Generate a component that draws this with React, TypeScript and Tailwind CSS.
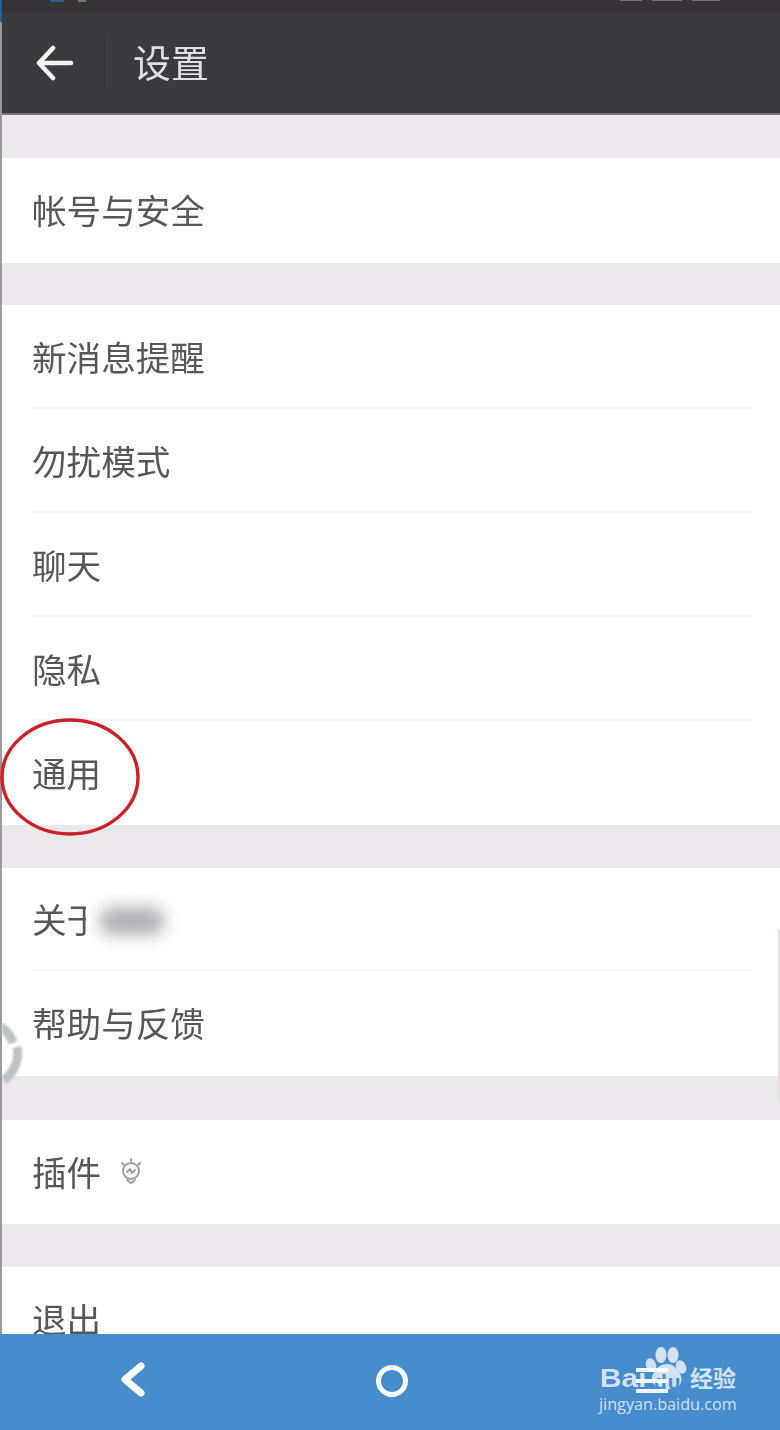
import React from "react";

const font = { fontFamily: '"Noto Sans CJK SC", "Noto Sans", sans-serif' };

function Row({ label, h, divider, children }: { label: string; h: string; divider?: boolean; children?: React.ReactNode }) {
  return (
    <div className={`${h} ml-[2px] bg-white pl-[30px] pr-[28px] flex flex-col shrink-0`}>
      <div className={`flex-1 flex items-center gap-[17px] ${divider ? "border-b-2 border-[#f6f5f7]" : "pb-[2px]"}`}>
        <span className="text-[34.6px] leading-none text-[#575759] blur-[0.6px]">{label}</span>
        {children}
      </div>
    </div>
  );
}

function Gap({ h }: { h: string }) {
  return <div className={`${h} bg-[#ebe8ec] ml-[2px] shrink-0`} />;
}

export default function App() {
  return (
    <div className="relative w-[780px] h-[1430px] overflow-hidden bg-[#9a9a9c] flex flex-col" style={font}>
      <div className="h-[12px] shrink-0 bg-[#353238] flex items-start justify-between pl-[50px] pr-[60px]">
        <div className="flex gap-[14px]">
          <div className="w-[14px] h-[2px] bg-[#2b5f8a] blur-[0.5px]" />
          <div className="w-[8px] h-[2px] bg-[#5d8a62] blur-[0.5px]" />
        </div>
        <div className="flex gap-[10px]">
          <div className="w-[22px] h-[1px] bg-[#77757a] blur-[0.5px]" />
          <div className="w-[30px] h-[1px] bg-[#77757a] blur-[0.5px]" />
          <div className="w-[28px] h-[1px] bg-[#77757a] blur-[0.5px]" />
        </div>
      </div>
      <header className="h-[103px] shrink-0 ml-[2px] bg-[#3a3a3f] border-b-2 border-[#77777b] flex items-center">
        <svg className="ml-[34px] blur-[0.5px]" width="38" height="36" viewBox="0 0 38 36" fill="none" stroke="#f4f4f4" strokeWidth="4.6" strokeLinecap="round" strokeLinejoin="round">
          <path d="M17 3 L3 18 L17 33" />
          <path d="M4 18 H35" />
        </svg>
        <div className="ml-[30px] w-[1px] h-[54px] bg-[#37373b]" />
        <span className="ml-[28px] mb-[4px] text-[38px] leading-none text-[#e0e0e2] blur-[0.6px]">设置</span>
      </header>

      <Gap h="h-[43px]" />
      <Row label="帐号与安全" h="h-[105px]" />
      <Gap h="h-[42px]" />
      <Row label="新消息提醒" h="h-[104px]" divider />
      <Row label="勿扰模式" h="h-[104px]" divider />
      <Row label="聊天" h="h-[104px]" divider />
      <Row label="隐私" h="h-[104px]" divider />
      <Row label="通用" h="h-[104px]" />
      <Gap h="h-[43px]" />
      <Row label="关于微信" h="h-[103px]" divider />
      <Row label="帮助与反馈" h="h-[105px]" />
      <Gap h="h-[44px]" />
      <Row label="插件" h="h-[104px]">
        <svg className="blur-[0.6px]" width="26" height="30" viewBox="0 0 26 30" fill="none" stroke="#9a9a9c" strokeWidth="1.8" strokeLinecap="round">
          <circle cx="13" cy="15" r="8" />
          <path d="M13 3v2M4 7l2 2M22 7l-2 2M9 24l4 3 4-3" />
          <path d="M9 16l3-3 2 4 3-3" />
        </svg>
      </Row>
      <Gap h="h-[43px]" />
      <div className="flex-1 min-h-0 ml-[2px] bg-white pl-[30px] pt-[34px] overflow-hidden">
        <span className="block text-[34.6px] leading-none text-[#575759] blur-[0.6px]">退出</span>
      </div>

      <nav className="relative h-[96px] shrink-0 bg-[#478ccb]">
        <svg className="absolute left-[120px] top-[28px]" width="26" height="36" viewBox="0 0 26 36" fill="none" stroke="#fff" strokeWidth="7" strokeLinecap="round" strokeLinejoin="round">
          <path d="M21 4 L5 17.5 L21 31" />
        </svg>
        <div className="absolute left-[376px] top-[31px] w-[32px] h-[32px] rounded-full border-[5px] border-white" />
      </nav>

      {/* red annotation */}
      <svg className="absolute left-0 top-[717px]" width="142" height="120" viewBox="0 0 142 120" fill="none">
        <ellipse cx="70" cy="60" rx="68" ry="57" stroke="#cb2027" strokeWidth="3.4" />
      </svg>

      {/* blurred redaction */}
      <div className="absolute left-[86px] top-[896px] w-[92px] h-[50px] bg-white flex items-center justify-center">
        <div className="w-[66px] h-[28px] rounded-full bg-[#b0b0b2] blur-[8px]" />
      </div>

      {/* floating arc at left edge */}
      <svg className="absolute left-[2px] top-[1020px] blur-[1px]" width="24" height="72" viewBox="0 0 24 72" fill="none" stroke="#c0c1c4" strokeWidth="9">
        <path d="M-2 6 A 32 32 0 0 1 11 23" />
        <path d="M15 27 A 32 32 0 0 1 2 60" />
      </svg>

      {/* right edge sliver */}
      <div className="absolute right-0 top-[930px] w-[2px] h-[170px] bg-[#e9dcd6]" />

      {/* left edge blue sliver */}
      <div className="absolute left-0 top-0 w-[2px] h-[22px] bg-[#2c5f96]" />

      {/* watermark */}
      <div className="absolute left-[598px] top-[1346px] w-[142px] h-[70px] text-white/75">
        <span className="absolute left-[2px] top-[17px] origin-left scale-x-[1.15] text-[26px] leading-[30px] font-bold" style={{ fontFamily: '"Liberation Sans", sans-serif' }}>Bai</span>
        <svg className="absolute left-[47px] top-0" width="44" height="46" viewBox="0 0 44 46" fill="currentColor">
          <ellipse cx="16" cy="9" rx="5.5" ry="8" />
          <ellipse cx="28" cy="9" rx="5.5" ry="8" />
          <ellipse cx="6" cy="19" rx="5" ry="7" transform="rotate(-20 6 19)" />
          <ellipse cx="36" cy="21" rx="5" ry="7" transform="rotate(-25 36 21)" />
          <path d="M22 18c6 0 8 3 11 7 4 4 5 11 1 15-3 3-8 3-12 3s-9 0-12-3c-4-4-4-11 0-15 3-4 6-7 12-7z" />
        </svg>
        <span className="absolute left-[56px] top-[24px] text-[21px] leading-[24px] font-bold tracking-[1px] text-[#478ccb]" style={{ fontFamily: '"Liberation Sans", sans-serif' }}>du</span>
        <span className="absolute left-[92px] top-[17px] text-[23px] leading-[28px] font-bold">经验</span>
        <span className="absolute left-[1px] top-[47px] text-[16.2px] leading-[22px] whitespace-nowrap" style={{ fontFamily: '"Open Sans", sans-serif' }}>jingyan.baidu.com</span>
        <div className="absolute left-[38px] top-[22px] w-[32px] h-[25px] flex flex-col justify-between">
          <div className="h-[4px] bg-white/90" />
          <div className="h-[4px] bg-white/90" />
          <div className="h-[4px] bg-white/90" />
        </div>
      </div>
    </div>
  );
}
